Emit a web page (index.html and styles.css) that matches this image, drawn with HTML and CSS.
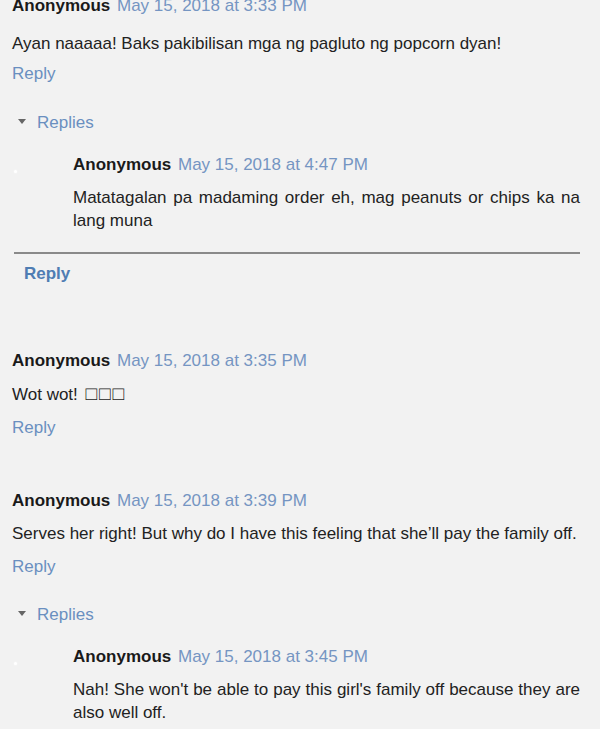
FILE: index.html
```html
<!DOCTYPE html>
<html>
<head>
<meta charset="UTF-8">
<title>Comments</title>
<link rel="stylesheet" href="styles.css">
</head>
<body>

<div class="comments">

  <div class="thread thread-first">
    <div class="comment">
      <div class="head"><b class="user">Anonymous</b> <a class="date" href="#">May 15, 2018 at 3:33 PM</a></div>
      <p class="text">Ayan naaaaa! Baks pakibilisan mga ng pagluto ng popcorn dyan!</p>
      <div class="actions"><a href="#">Reply</a></div>
    </div>
    <div class="toggle"><span class="arrow"></span><a href="#">Replies</a></div>
    <div class="replies">
      <span class="dot"></span>
      <div class="comment">
        <div class="head"><b class="user">Anonymous</b> <a class="date" href="#">May 15, 2018 at 4:47 PM</a></div>
        <p class="text text-wrap">Matatagalan pa madaming order eh, mag peanuts or chips ka na lang muna</p>
      </div>
    </div>
    <div class="continue"><a href="#">Reply</a></div>
  </div>

  <div class="thread">
    <div class="comment">
      <div class="head"><b class="user">Anonymous</b> <a class="date" href="#">May 15, 2018 at 3:35 PM</a></div>
      <p class="text">Wot wot! <span class="boxes">&#9633;&#9633;&#9633;</span></p>
      <div class="actions"><a href="#">Reply</a></div>
    </div>
  </div>

  <div class="thread thread-last">
    <div class="comment">
      <div class="head"><b class="user">Anonymous</b> <a class="date" href="#">May 15, 2018 at 3:39 PM</a></div>
      <p class="text">Serves her right! But why do I have this feeling that she’ll pay the family off.</p>
      <div class="actions"><a href="#">Reply</a></div>
    </div>
    <div class="toggle"><span class="arrow"></span><a href="#">Replies</a></div>
    <div class="replies">
      <span class="dot"></span>
      <div class="comment">
        <div class="head"><b class="user">Anonymous</b> <a class="date" href="#">May 15, 2018 at 3:45 PM</a></div>
        <p class="text text-wrap">Nah! She won't be able to pay this girl's family off because they are also well off.</p>
      </div>
    </div>
  </div>

</div>

</body>
</html>
```

FILE: styles.css
```css
*{ margin: 0; padding: 0; }
html, body{ height: 100%; }
body{ background: #f2f2f2; color: #222; font-family: "Liberation Sans", Arial, sans-serif; font-size: 17px; overflow: hidden; }
a{ color: #6a8fc0; text-decoration: none; }

/* first comment is scrolled partly out of view */
.comments{ padding: 0 20px 0 12px; margin-top: -5px; }

.thread{ margin-bottom: 51px; }
.thread-first{ margin-bottom: 65px; }
.thread-first > .comment > .text{ margin-top: 16px; }
.thread-first > .comment > .actions{ margin-top: 8px; }
.thread-last > .toggle{ margin-top: 26px; }
.thread-last .text-wrap{ line-height: 22px; }

.comment .head{ line-height: 22px; white-space: nowrap; }
.comment .user{ font-weight: bold; color: #1a1a1a; }
.comment .date{ margin-left: 2px; color: #7595c2; }
.comment .text{ margin-top: 11px; line-height: 22px; }
.comment .text-wrap{ line-height: 23px; text-align: justify; margin-top: 10px; }
.comment .actions{ margin-top: 11px; line-height: 22px; }
.boxes{ margin-left: 3px; letter-spacing: 2px; font-size: 19px; }

.toggle{ margin-top: 27px; line-height: 22px; padding-left: 6px; display: flex; align-items: center; }
.toggle .arrow{
  width: 0; height: 0; margin-right: 11px; margin-top: -3px;
  border-left: 4px solid transparent; border-right: 4px solid transparent;
  border-top: 5px solid #666;
}

.replies{ position: relative; margin-top: 20px; padding-left: 61px; }
.replies .dot{
  position: absolute; left: 2px; top: 16px; width: 3px; height: 3px;
  border-radius: 50%; background: #fff; box-shadow: 0 0 2px #fff;
}

.continue{
  margin: 20px 0 0 2px; padding: 9px 0 0 10px;
  border-top: 2px solid #8a8a8a; line-height: 22px;
}
.continue a{ font-weight: bold; color: #4f7db3; }
```
